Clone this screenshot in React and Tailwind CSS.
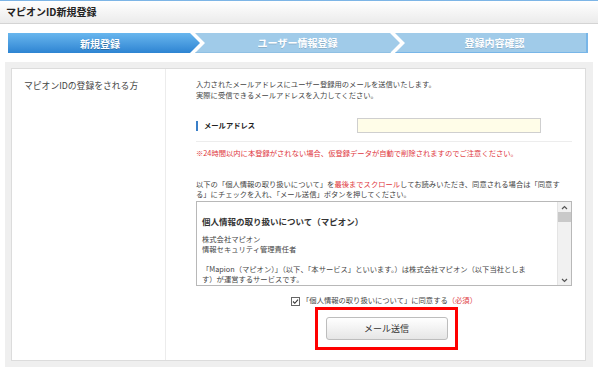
const steps = [
  { label: '新規登録', active: true },
  { label: 'ユーザー情報登録' },
  { label: '登録内容確認' },
]

function StepBar() {
  return (
    <div className="mt-[9px] flex h-[20px] pl-[8px] pr-[10px]">
      <div className="w-[192px] shrink-0 flex items-center justify-center pr-[8px] bg-linear-to-b from-[#68b6ee] to-[#2d84d2] text-white text-[10px] font-bold [text-shadow:0_1px_0_rgba(0,0,0,0.25)] [clip-path:polygon(0_0,calc(100%_-_10px)_0,100%_50%,calc(100%_-_10px)_100%,0_100%)]">
        {steps[0].label}
      </div>
      <div className="w-[205px] shrink-0 -ml-[5px] flex items-center justify-center bg-[#a0cbe9] border-b border-[#8fc0e4] text-white text-[10px] font-bold [text-shadow:0_1px_0_rgba(0,0,0,0.15)] [clip-path:polygon(0_0,calc(100%_-_10px)_0,100%_50%,calc(100%_-_10px)_100%,0_100%,10px_50%)]">
        {steps[1].label}
      </div>
      <div className="flex-1 -ml-[5px] flex items-center justify-center pl-[8px] bg-[#a0cbe9] border-b border-r-2 border-[#78b6e8] text-white text-[10px] font-bold [text-shadow:0_1px_0_rgba(0,0,0,0.15)] [clip-path:polygon(0_0,100%_0,100%_100%,0_100%,10px_50%)]">
        {steps[2].label}
      </div>
    </div>
  )
}

function FakeScrollbar() {
  return (
    <div className="w-[14px] shrink-0 bg-[#f1f1f1] border-l border-[#e4e4e4] flex flex-col">
      <div className="h-[10px] flex items-center justify-center">
        <svg width="7" height="5" viewBox="0 0 7 5">
          <path d="M1 4 L3.5 1.5 L6 4" fill="none" stroke="#555" strokeWidth="1.2" />
        </svg>
      </div>
      <div className="h-[10px] bg-[#c9c9c9]" />
      <div className="flex-1" />
      <div className="h-[10px] flex items-center justify-center">
        <svg width="7" height="5" viewBox="0 0 7 5">
          <path d="M1 1 L3.5 3.5 L6 1" fill="none" stroke="#555" strokeWidth="1.2" />
        </svg>
      </div>
    </div>
  )
}

export default function App() {
  return (
    <div className="w-[598px] h-[371px] overflow-hidden bg-white text-[#333] font-['Noto_Sans_CJK_JP','Liberation_Sans',sans-serif]">
      {/* header */}
      <div className="h-[24px] border-t border-t-[#7db5e6] border-b border-b-[#d4d4d4] bg-linear-to-b from-white to-[#ebebeb] flex items-center pl-[6px]">
        <h1 className="text-[10px] font-bold leading-none text-[#222]">マピオンID新規登録</h1>
      </div>

      <StepBar />

      {/* panel */}
      <div className="mx-[5px] mt-[9px] h-[305px] bg-[#efefef] pt-[6px] pb-[6px] pl-[6px] pr-[7px]">
        <div className="h-full bg-white border border-[#dcdcdc] flex">
          <div className="w-[154px] shrink-0 border-r border-[#ececec] pt-[11px] pl-[12px]">
            <p className="text-[8.8px] leading-[11px] text-[#444]">マピオンIDの登録をされる方</p>
          </div>

          <div className="flex-1 pl-[30px] pr-[13px] pt-[10px] text-[7.3px]">
            <p className="leading-[11px] text-[#444]">
              入力されたメールアドレスにユーザー登録用のメールを送信いたします。
              <br />
              実際に受信できるメールアドレスを入力してください。
            </p>

            <div className="mt-[17px] pb-[8px] border-b border-[#ededed]">
              <div className="flex items-center h-[15px]">
                <div className="w-[161px] shrink-0 flex items-center">
                  <span className="w-[2px] h-[10px] bg-[#3a7fc8]" />
                  <span className="ml-[6px] font-bold text-[#222] leading-none">メールアドレス</span>
                </div>
                <input
                  type="text"
                  className="w-[184px] h-[15px] bg-[#fffde8] border border-[#cfcfcf] outline-none"
                />
              </div>
            </div>

            <p className="mt-[6px] leading-[11px] text-[#e0383e]">
              ※24時間以内に本登録がされない場合、仮登録データが自動で削除されますのでご注意ください。
            </p>

            <p className="mt-[20px] leading-[10px] text-[#444]">
              以下の「個人情報の取り扱いについて」を<span className="text-[#e0383e]">最後までスクロール</span>してお読みいただき、同意される場合は「同意す
              <br />
              る」にチェックを入れ、「メール送信」ボタンを押してください。
            </p>

            <div className="mt-[2px] h-[85px] border border-[#b8b8b8] flex overflow-hidden">
              <div className="flex-1 pl-[5px] pt-[13px] text-[#444]">
                <h2 className="text-[8.5px] leading-[12px] font-bold text-[#333]">個人情報の取り扱いについて（マピオン）</h2>
                <p className="mt-[7px] leading-[10px]">
                  株式会社マピオン
                  <br />
                  情報セキュリティ管理責任者
                </p>
                <p className="mt-[10px] leading-[10px]">
                  「Mapion（マピオン）」（以下、「本サービス」といいます。）は株式会社マピオン（以下当社としま
                  <br />
                  す）が運営するサービスです。
                </p>
              </div>
              <FakeScrollbar />
            </div>

            <label className="mt-[10px] h-[10px] flex items-center justify-center leading-none">
              <svg width="9" height="9" viewBox="0 0 9 9" className="mr-[2px]">
                <rect x="0.5" y="0.5" width="8" height="8" fill="white" stroke="#666" />
                <path d="M2 4.5 L3.8 6.3 L7 2.6" fill="none" stroke="#333" strokeWidth="1.1" />
              </svg>
              <span className="text-[#444]">「個人情報の取り扱いについて」に同意する</span>
              <span className="text-[#e0383e]">（必須）</span>
            </label>

            <div className="mt-[1px] ml-[119px] w-[143px] h-[43px] border-[3px] border-[#ff0000] flex items-center justify-center">
              <button className="w-[122px] h-[23px] rounded-[3px] border border-[#bdbdbd] bg-linear-to-b from-white to-[#e6e6e6] text-[9px] text-[#333] leading-none">
                メール送信
              </button>
            </div>
          </div>
        </div>
      </div>
    </div>
  )
}
